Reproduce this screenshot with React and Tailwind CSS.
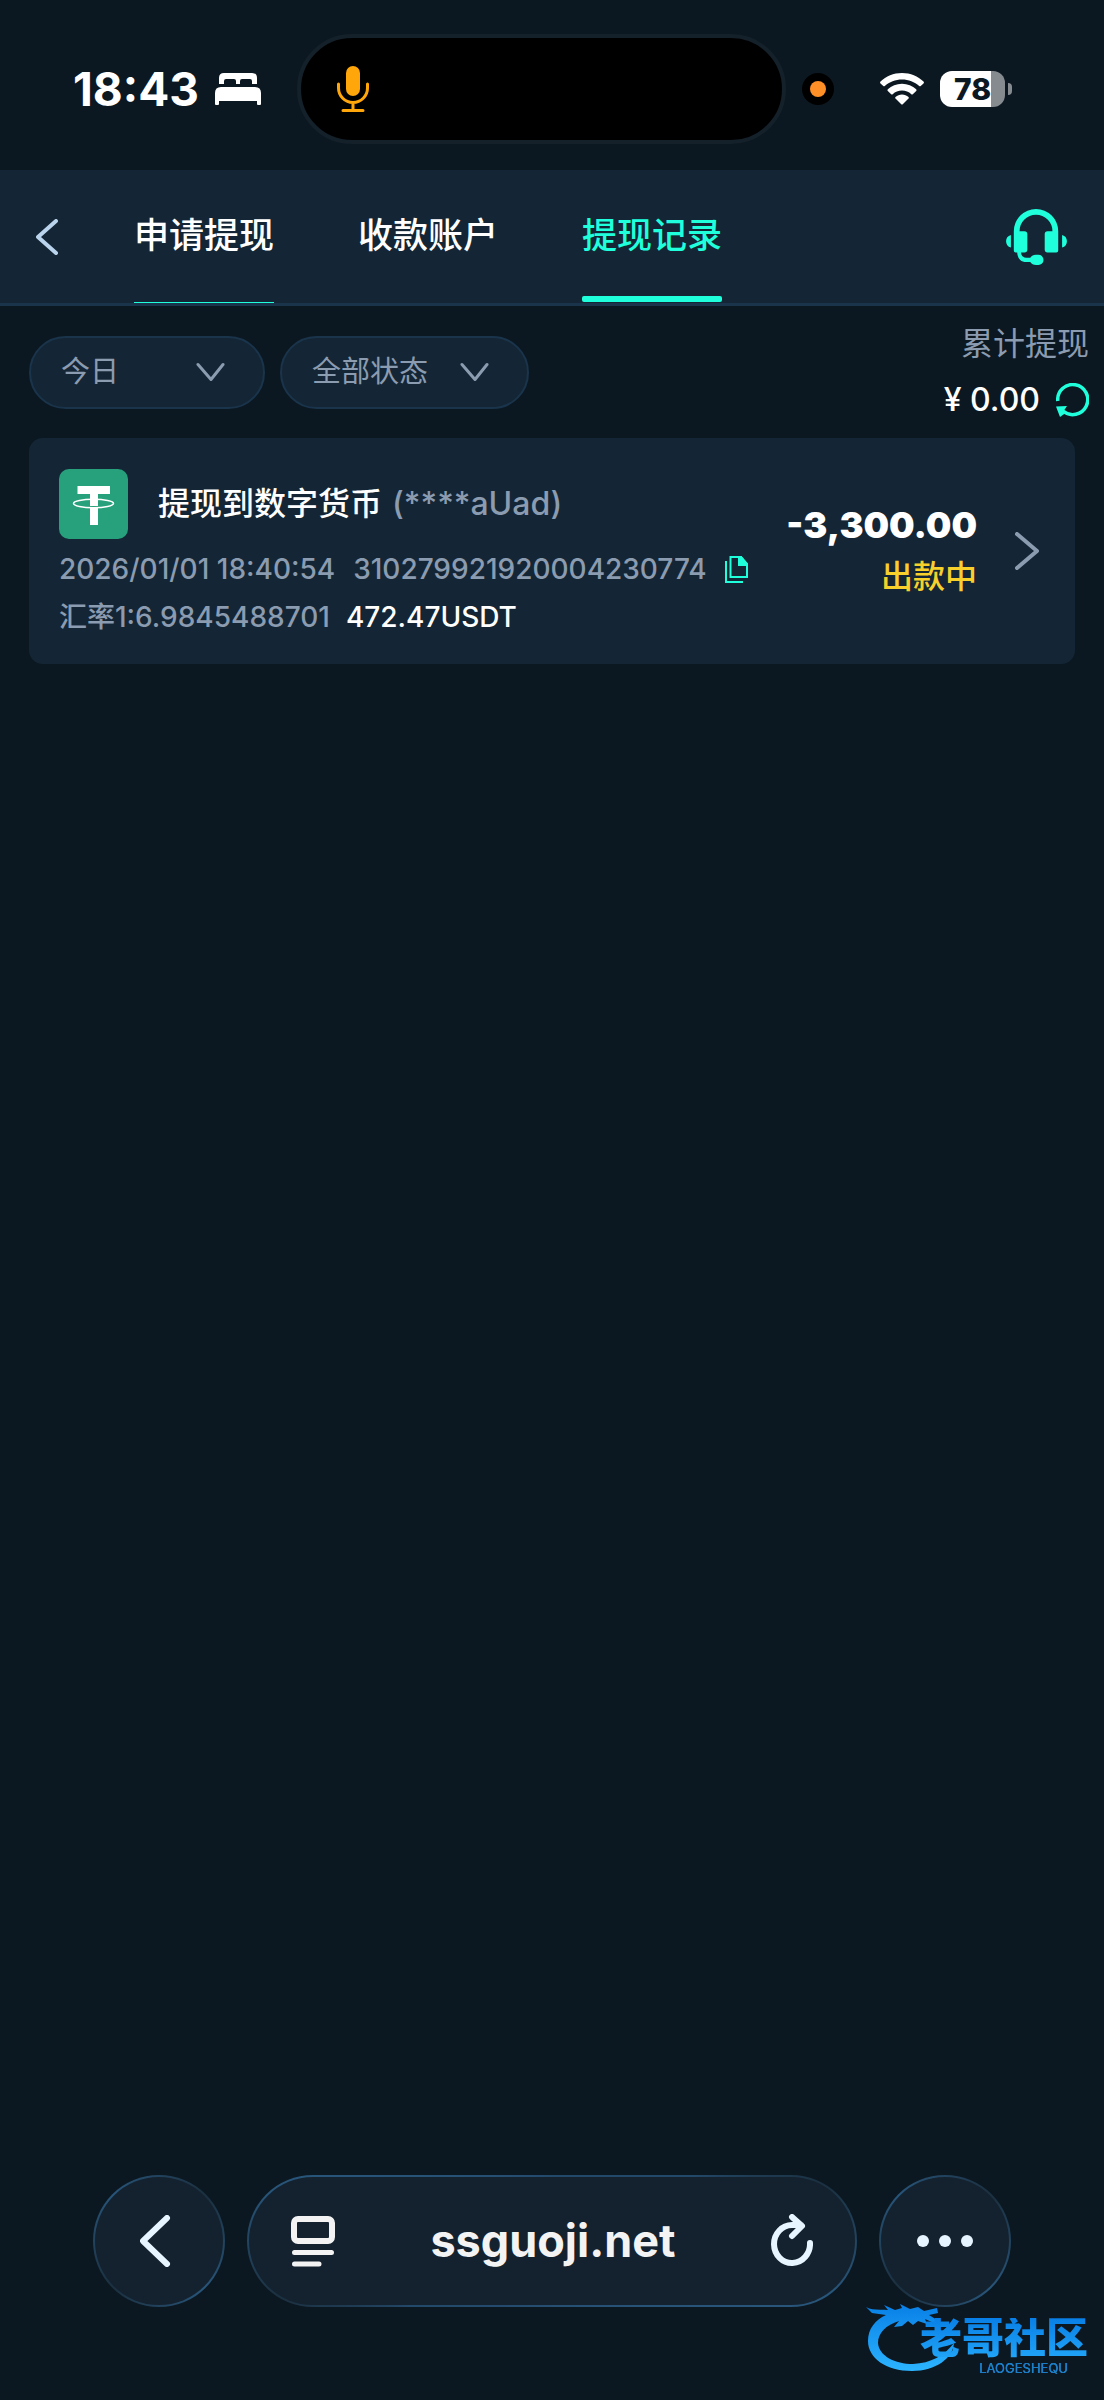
import clsx from 'clsx'

const tabs = [
  { id: 'apply', label: '申请提现', line: 'h-px' },
  { id: 'accounts', label: '收款账户', line: 'hidden' },
  { id: 'records', label: '提现记录', line: 'bottom-px h-1.5 rounded-xs', active: true },
]

const filters = [
  { id: 'range', name: '日期', options: ['今日', '昨日', '近7日'], width: 'w-[236px]' },
  { id: 'status', name: '状态', options: ['全部状态', '出款中', '已完成'], width: 'w-[249px]' },
]

const records = [
  {
    id: '310279921920004230774',
    title: '提现到数字货币',
    account: '(****aUad)',
    time: '2026/01/01 18:40:54',
    rate: '汇率1:6.9845488701',
    received: '472.47USDT',
    amount: '-3,300.00',
    status: '出款中',
  },
]

function BedIcon() {
  return (
    <svg width="46" height="33" viewBox="0 0 46 33" fill="#fff">
      <path d="M4 11V5Q4 0 9 0H37Q42 0 42 5V11H37V8Q37 6 35 6H27Q25 6 25 8V11H21V8Q21 6 19 6H11Q9 6 9 8V11Z" />
      <path d="M0 20Q0 14 6 14H40Q46 14 46 20V31Q46 32 45 32H43Q42 32 42 31V28H4V31Q4 32 3 32H1Q0 32 0 31Z" />
    </svg>
  )
}

function MicIcon() {
  return (
    <svg width="32" height="46" viewBox="0 0 32 46" fill="none" stroke="#ffa60a" strokeWidth="3" strokeLinecap="round">
      <rect x="9" y="0" width="14" height="30" rx="7" fill="#ffa60a" stroke="none" />
      <path d="M1.5 18V22A14.5 14.5 0 0 0 30.5 22V18M16 37V44M6 44.5H26" />
    </svg>
  )
}

function WifiIcon() {
  return (
    <svg width="44" height="32" viewBox="0 0 44 32" fill="#fff">
      <path d="M22 0C30.5 0 38 3.4 43.5 8.6Q44.4 9.5 43.5 10.4L40.7 13Q40 13.6 39.2 13C34.6 8.8 28.6 6.4 22 6.4S9.4 8.8 4.8 13Q4 13.6 3.3 13L.5 10.4Q-.4 9.5 .5 8.6C6 3.4 13.5 0 22 0Z" />
      <path d="M22 10.8C27.5 10.8 32.5 12.9 36.2 16.3Q37 17.2 36.2 18L32.8 21.2Q32 21.8 31.3 21.2C28.8 19 25.6 17.6 22 17.6S15.2 19 12.7 21.2Q12 21.8 11.2 21.2L7.8 18Q7 17.2 7.8 16.3C11.5 12.9 16.5 10.8 22 10.8Z" />
      <path d="M22 21.6C24.5 21.6 26.7 22.5 28.5 24Q29.2 24.7 28.5 25.5L23 31Q22 32 21 31L15.5 25.5Q14.8 24.7 15.5 24C17.3 22.5 19.5 21.6 22 21.6Z" />
    </svg>
  )
}

function HeadsetIcon() {
  return (
    <svg width="63" height="56" viewBox="0 0 63 58" fill="#1fffdb" className="overflow-visible">
      <path d="M8 23A23 23 0 0 1 54 23V43Q54 45 52 45H43Q40 45 40 42V26Q40 23 43 23H48A17 17 0 0 0 14 23H19Q22 23 22 26V42Q22 45 19 45H10Q8 45 8 43Z" />
      <path d="M5 27V40C-1.7 38.5 -1.7 28.5 5 27ZM58 27V40C64.7 38.5 64.7 28.5 58 27Z" />
      <path d="M11.5 44H15.5C15.5 48.5 17.5 50.5 21 50.5H25Q27 47.5 31 47.5H33.5A5.25 5.25 0 0 1 33.5 58H31Q27 58 25 55H21C15 55 11.5 51 11.5 44Z" />
    </svg>
  )
}

function TetherIcon() {
  return (
    <svg width="69" height="70" viewBox="0 0 69 70" className="shrink-0">
      <rect width="69" height="70" rx="10" fill="#26a17b" />
      <path d="M18.5 17H51V25H39V37H31V25H18.5ZM31 39H39V56H31Z" fill="#fff" />
      <ellipse cx="34.5" cy="34.5" rx="20" ry="4.2" fill="none" stroke="#fff" strokeWidth="1.5" />
    </svg>
  )
}

function CopyIcon() {
  return (
    <svg width="23" height="27" viewBox="0 0 23 27" fill="none" stroke="#1fffdb" strokeWidth="2">
      <path d="M1 5V26H18M5.5 1H16L22 8V21H5.5Z" />
      <path d="M14 1H16L22 8V9H14Z" fill="#1fffdb" />
    </svg>
  )
}

function RefreshIcon() {
  return (
    <svg width="33" height="34" viewBox="0 0 33 34">
      <path d="M1.8 18A15 15 0 1 1 7 28" fill="none" stroke="#1fffdb" strokeWidth="3.5" />
      <path d="M0 23.5L11 23L8 27.5L9.5 30L4 34Z" fill="#1fffdb" />
    </svg>
  )
}

function Chevron({ d, width, height, stroke = 4, className }) {
  return (
    <svg
      width={width}
      height={height}
      viewBox={`0 0 ${width} ${height}`}
      fill="none"
      stroke="currentColor"
      strokeWidth={stroke}
      strokeLinecap="round"
      strokeLinejoin="round"
      className={clsx('shrink-0', className)}
    >
      <path d={d} />
    </svg>
  )
}

function StatusBar() {
  return (
    <div className="flex items-center pt-[34px] pb-[26px] pl-[73px] pr-[92px]">
      <span className="text-[46px] leading-[52px] font-bold mr-4">18:43</span>
      <BedIcon />
      <div className="flex-1 h-[110px] ml-9 mr-4 pl-9 flex items-center rounded-full bg-black border-4 border-[#14202a]">
        <MicIcon />
      </div>
      <span className="size-8 mr-[46px] rounded-full bg-black flex items-center justify-center">
        <span className="size-4 rounded-full bg-[#ff8f27]" />
      </span>
      <WifiIcon />
      <div className="ml-4 flex items-center gap-[3px]">
        <span className="w-[65px] h-9 rounded-[12px] bg-linear-to-r from-white from-79% to-[#868b90] to-79% text-[#0c1821] text-[30px] leading-9 font-extrabold text-center">
          78
        </span>
        <span className="w-1 h-3 rounded-r-full bg-[#868b90]" />
      </div>
    </div>
  )
}

function NavBar() {
  return (
    <header className="h-[136px] px-9 flex items-center bg-[#142635] border-b-[3px] border-[#1a344b]">
      <button aria-label="返回" className="text-[#b9d4ec] mr-[76px]">
        <Chevron width={22} height={36} d="M20 2L2 18L20 34" />
      </button>
      <nav className="flex-1 self-stretch flex gap-[84px]">
        {tabs.map(({ id, label, line, active }) => (
          <a
            key={id}
            href={`#${id}`}
            className={clsx(
              'relative flex items-center pb-1 text-[35px] leading-10 font-medium whitespace-nowrap',
              active ? 'text-[#1fffdb]' : 'text-white'
            )}
          >
            {label}
            <span className={clsx('absolute inset-x-0 bottom-0 bg-[#1fffdb]', line)} />
          </a>
        ))}
      </nav>
      <button aria-label="客服">
        <HeadsetIcon />
      </button>
    </header>
  )
}

function FilterBar() {
  return (
    <div className="flex items-center gap-[15px] py-[18px] pl-[29px] pr-[15px]">
      {filters.map(({ id, name, options, width }) => (
        <div key={id} className={clsx('relative', width)}>
          <select
            aria-label={name}
            className="w-full h-[73px] pl-[30px] pr-16 rounded-full appearance-none bg-[#142635] border-2 border-[#1a344b] text-[29px] leading-10 text-[#8b9bb0]"
          >
            {options.map((option) => (
              <option key={option}>{option}</option>
            ))}
          </select>
          <Chevron
            width={29}
            height={19}
            stroke={3}
            d="M2 2L15 17L27 2"
            className="absolute right-10 top-1/2 -translate-y-1/2 pointer-events-none text-[#8b9bb0]"
          />
        </div>
      ))}
      <div className="ml-auto flex flex-col items-end gap-4">
        <span className="text-[32px] leading-10 text-[#8b9bb0]">累计提现</span>
        <div className="flex items-center gap-4 text-[32px] leading-10 font-medium">
          ¥ 0.00
          <button aria-label="刷新">
            <RefreshIcon />
          </button>
        </div>
      </div>
    </div>
  )
}

function RecordCard({ record }) {
  return (
    <li className="flex items-center rounded-[14px] bg-[#142635] py-[29px] pl-[30px] pr-9">
      <div className="flex flex-col gap-3 pt-0.5 text-[28px] leading-9 font-medium text-[#8b9bb0] whitespace-nowrap">
        <div className="flex items-center text-[32px]">
          <TetherIcon />
          <h2 className="ml-[30px] mr-2.5 text-white">{record.title}</h2>
          <span>{record.account}</span>
        </div>
        <div className="flex items-center gap-[18px]">
          <span>{record.time}</span>
          <span>{record.id}</span>
          <button aria-label="复制单号">
            <CopyIcon />
          </button>
        </div>
        <div className="flex items-center gap-4">
          <span>{record.rate}</span>
          <span className="text-white">{record.received}</span>
        </div>
      </div>
      <div className="ml-auto flex flex-col items-end gap-3 leading-10">
        <span className="text-[36px] font-black">{record.amount}</span>
        <span className="text-[32px] font-medium text-[#f7d02c]">{record.status}</span>
      </div>
      <Chevron width={24} height={38} d="M2 2L22 19L2 36" className="ml-[38px] text-[#8b9bb0]" />
    </li>
  )
}

function GlassButton({ label, children }) {
  return (
    <button
      aria-label={label}
      className="size-[132px] shrink-0 rounded-full p-0.5 text-[#e6f5ff] bg-[conic-gradient(from_45deg,#1b3040,#28557a,#1b3040,#28557a,#1b3040)]"
    >
      <span className="size-full rounded-full bg-[#14222f] flex items-center justify-center">{children}</span>
    </button>
  )
}

function BrowserBar() {
  return (
    <footer className="flex gap-[22px] px-[93px] pb-[93px]">
      <GlassButton label="后退">
        <Chevron width={38} height={52} stroke={6} d="M27 3L3 26L27 49" />
      </GlassButton>
      <div className="flex-1 rounded-full p-0.5 bg-[conic-gradient(#23496a_0deg,#23496a_65deg,#1b3040_78deg,#28557a_100deg,#23496a_245deg,#1b3040_258deg,#28557a_280deg,#23496a_360deg)]">
        <div className="h-32 rounded-full bg-[#14222f] flex items-center justify-between px-[42px]">
          <button aria-label="阅读器">
            <svg width="44" height="51" viewBox="0 0 44 51" fill="none" stroke="#f3f3f3" strokeLinecap="round">
              <rect x="3" y="3" width="38" height="22" rx="4" strokeWidth="6" />
              <path d="M3.5 36.5H40.5M3.5 48H28" strokeWidth="5" />
            </svg>
          </button>
          <span className="text-[45px] leading-[56px] font-bold text-[#f3f3f3]">ssguoji.net</span>
          <button aria-label="重新加载">
            <svg width="42" height="54" viewBox="0 0 42 54" fill="none" stroke="#e6f5ff" strokeWidth="6" strokeLinecap="round" strokeLinejoin="round">
              <path d="M39 29A18 19 0 1 1 21 11H30M21 3L31 12L21 22" />
            </svg>
          </button>
        </div>
      </div>
      <GlassButton label="更多">
        <svg width="56" height="12" viewBox="0 0 56 12" fill="currentColor">
          <circle cx="6" cy="6" r="6" />
          <circle cx="28" cy="6" r="6" />
          <circle cx="50" cy="6" r="6" />
        </svg>
      </GlassButton>
    </footer>
  )
}

function Watermark() {
  return (
    <div className="absolute right-4 bottom-6">
      <svg width="90" height="70" viewBox="0 0 90 70" className="absolute -left-[54px] bottom-1">
        <defs>
          <linearGradient id="dragon" x1="0" y1="0" x2="0" y2="1">
            <stop offset="0" stopColor="#087fe6" />
            <stop offset="1" stopColor="#2cb4ff" />
          </linearGradient>
        </defs>
        <path
          fill="url(#dragon)"
          d="M0 5C6 9 14 7 22 8L18 3L29 8L36 6L34 2L44 7L52 5L58 9L71 6L72 11L63 13L71 18L68 21L59 17L61 22L52 19L47 23L42 19L36 24L28 25L33 19C20 23 12 31 12 41C13 54 29 62 47 62C65 61 78 54 88 41C87 56 70 69 46 69C20 69 2 56 2 39C2 27 9 18 20 13L6 11Z"
        />
      </svg>
      <div className="relative flex flex-col items-end text-transparent bg-clip-text bg-linear-to-b from-[#087fe6] to-[#2cb4ff]">
        <span className="text-[42px] leading-10 font-black">老哥社区</span>
        <span className="mr-5 mt-0.5 text-[13px] leading-4 text-[#1b7cc4]">LAOGESHEQU</span>
      </div>
    </div>
  )
}

export default function App() {
  return (
    <div className="relative min-h-screen flex flex-col bg-[#0c1821] text-white font-['Inter','Noto_Sans_CJK_SC',sans-serif]">
      <StatusBar />
      <NavBar />
      <main className="flex-1">
        <FilterBar />
        <ul className="px-[29px] flex flex-col gap-4">
          {records.map((record) => (
            <RecordCard key={record.id} record={record} />
          ))}
        </ul>
      </main>
      <BrowserBar />
      <Watermark />
    </div>
  )
}
